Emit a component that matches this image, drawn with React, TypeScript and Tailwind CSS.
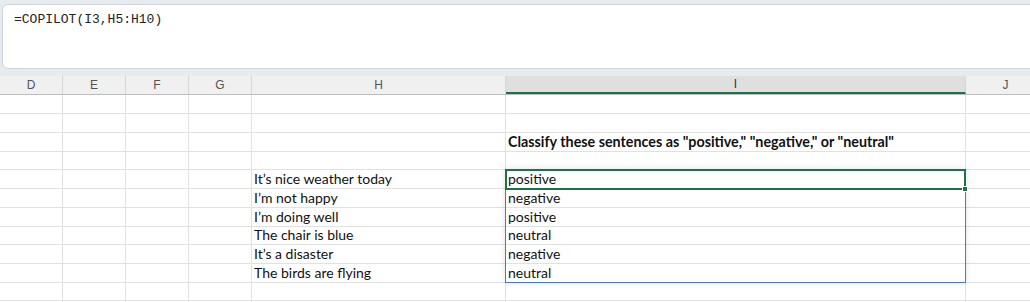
import React from 'react';

const cols = [
  { key: 'D', w: 'w-[63px]' },
  { key: 'E', w: 'w-[63px]' },
  { key: 'F', w: 'w-[63px]' },
  { key: 'G', w: 'w-[63px]' },
  { key: 'H', w: 'w-[254px]' },
  { key: 'I', w: 'w-[460px]' },
  { key: 'J', w: 'w-[80px]' },
];

// row heights include the 1px bottom gridline
const rowH = ['h-[19px]', 'h-[19px]', 'h-[19px]', 'h-[18px]', 'h-[19px]', 'h-[19px]', 'h-[19px]', 'h-[18px]', 'h-[19px]', 'h-[19px]', 'h-[18px]', 'h-[19px]'];

const cells: Record<string, { text: string; bold?: boolean }> = {
  I3: { text: 'Classify these sentences as "positive," "negative," or "neutral"', bold: true },
  H5: { text: 'It’s nice weather today' },
  H6: { text: 'I’m not happy' },
  H7: { text: 'I’m doing well' },
  H8: { text: 'The chair is blue' },
  H9: { text: 'It’s a disaster' },
  H10: { text: 'The birds are flying' },
  I5: { text: 'positive' },
  I6: { text: 'negative' },
  I7: { text: 'positive' },
  I8: { text: 'neutral' },
  I9: { text: 'negative' },
  I10: { text: 'neutral' },
};

export default function App() {
  return (
    <div className="flex h-[302px] w-[1030px] flex-col overflow-hidden bg-[#e4ecef]">
      {/* formula bar */}
      <div className="pt-[4px] pb-[7px] pl-[2px]">
        <div className="h-[65px] w-[1060px] rounded-[6px] border border-[#cfd3d6] bg-white px-[11px] pt-[5px] font-['Liberation_Mono',monospace] text-[13px] leading-[20px] text-[#222]">
          =COPILOT(I3,H5:H10)
        </div>
      </div>

      {/* column headers */}
      <div className="flex h-[19px] shrink-0 border-b border-[#bdbdbd] bg-[#f0f0f0]">
        {cols.map((c) => (
          <div
            key={c.key}
            className={`${c.w} flex shrink-0 items-center justify-center border-r border-[#d6d6d6] font-['Liberation_Sans',sans-serif] text-[12px] ${
              c.key === 'I' ? 'border-b-2 border-b-[#1e7145] bg-[#dfdfdf] text-[#333]' : 'text-[#555]'
            }`}
          >
            {c.key}
          </div>
        ))}
      </div>

      {/* grid */}
      <div className="relative flex-1 bg-white">
        {rowH.map((h, i) => (
          <div key={i} className={`flex ${h} border-b border-[#e1e1e1]`}>
            {cols.map((c) => {
              const cell = cells[`${c.key}${i + 1}`];
              return (
                <div
                  key={c.key}
                  className={`${c.w} flex shrink-0 items-end overflow-visible whitespace-nowrap border-r border-[#e1e1e1] pl-[2px] font-['Lato',sans-serif] leading-[18px] text-[#111] ${
                    cell?.bold ? 'text-[14.3px] font-bold' : 'text-[14px]'
                  }`}
                >
                  {cell?.text}
                </div>
              );
            })}
          </div>
        ))}

        {/* spill range outline */}
        <div className="pointer-events-none absolute left-[505px] top-[74px] h-[114px] w-[461px] border border-[#4a78d1] shadow-[0_0_6px_rgba(0,0,0,0.12)]" />
        {/* active cell */}
        <div className="pointer-events-none absolute left-[505px] top-[74px] h-[21px] w-[461px] border-2 border-[#1e7145]" />
        <div className="pointer-events-none absolute left-[962px] top-[91px] h-[6px] w-[6px] border border-white bg-[#1e7145]" />
      </div>
    </div>
  );
}
